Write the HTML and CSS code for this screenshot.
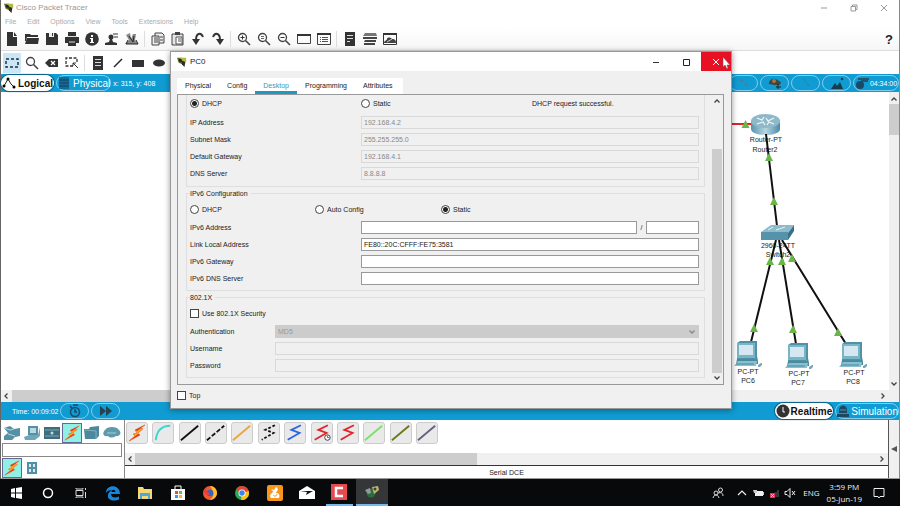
FILE: index.html
```html
<!DOCTYPE html>
<html lang="en">
<head>
<meta charset="utf-8">
<title>Cisco Packet Tracer</title>
<link rel="stylesheet" href="styles.css">
</head>
<body>
<svg class="defs" aria-hidden="true">
  <defs>
    <symbol id="app" viewBox="0 0 12 12"><path d="M0 1l6 0 3 5-2 3-5-2z" fill="#5c6b2c"/><path d="M3 1h8v5l-4 1z" fill="#b5b845"/><path d="M5 4l5 2-1 6-3-3z" fill="#2d3020"/><circle cx="4" cy="4" r="1.800" fill="#222"/></symbol>
    <symbol id="bolt" viewBox="0 0 18 18"><path d="M17 1L7 6l2 3-4 1 2 2-6 5 11-6-2-2 5-4-3-1z" fill="#f9a51a" stroke="#f0792a" stroke-width=".8"/><path d="M17 1L7 6l2 1zM1 17l11-6-2-1z" fill="#dd3434"/></symbol>
    <symbol id="up" viewBox="0 0 8 8"><path d="M1.500 5.500L4 3l2.500 2.500" fill="none" stroke="#444" stroke-width="1.300"/></symbol>
    <symbol id="down" viewBox="0 0 8 8"><path d="M1.500 2.500L4 5l2.500-2.500" fill="none" stroke="#444" stroke-width="1.300"/></symbol>
    <symbol id="left" viewBox="0 0 8 8"><path d="M5.500 1.500L3 4l2.500 2.500" fill="none" stroke="#444" stroke-width="1.300"/></symbol>
    <symbol id="right" viewBox="0 0 8 8"><path d="M2.500 1.500L5 4 2.500 6.500" fill="none" stroke="#444" stroke-width="1.300"/></symbol>
    <symbol id="lens" viewBox="0 0 14 14"><circle cx="5.500" cy="5.500" r="4" fill="none" stroke="#444" stroke-width="1.300"/><path d="M8.500 8.500l4.500 4.500" stroke="#444" stroke-width="1.600"/></symbol>
    <symbol id="zigzag" viewBox="0 0 22 22"><path d="M17.500 2.500L7 7.500l9 3.500L3 18.500" fill="none" stroke="currentColor" stroke-width="2"/></symbol>
    <symbol id="pc" viewBox="0 0 28 26"><path d="M3 2l3-2h17v16l-2 2H3z" fill="#4f92a8"/><path d="M3 2h18v15H3z" fill="#78b5c6"/><path d="M5 4h14v10H5z" fill="#d5e7f1"/><path d="M3 18h18l2-3 1 5v3H2z" fill="#4b8ba0"/><path d="M0 25l4-5h19l-1 5z" fill="#89bfce"/><path d="M2 23h18" stroke="#4b8ba0"/><path d="M24 24l3-2h1v2l-2 2h-2z" fill="#7aa7b5"/></symbol>
    <symbol id="link" viewBox="0 0 8 8"><path d="M4 0l4 8H0z" fill="#69b545"/></symbol>
  </defs>
</svg>
<div class="app">
  <header class="titlebar">
    <svg class="i10"><use href="#app"/></svg><span class="apptitle">Cisco Packet Tracer</span>
    <div class="winbtns faded">
      <button aria-label="Minimize"><svg class="i8" viewBox="0 0 8 8"><path d="M1 4h6" stroke="#999"/></svg></button>
      <button aria-label="Restore"><svg class="i8" viewBox="0 0 8 8"><path d="M1 2.500h4.500v4.500H1zM2.500 2.500V1H7v4.500H5.500" fill="none" stroke="#999"/></svg></button>
      <button aria-label="Close"><svg class="i8" viewBox="0 0 8 8"><path d="M1 1l6 6M7 1L1 7" stroke="#999"/></svg></button>
    </div>
  </header>
  <nav class="menubar"><a href="#">File</a><a href="#">Edit</a><a href="#">Options</a><a href="#">View</a><a href="#">Tools</a><a href="#">Extensions</a><a href="#">Help</a></nav>

  <div class="toolbar main">
    <button aria-label="New"><svg viewBox="0 0 14 14"><path d="M2 0h6v5h4v9H2z" fill="#333"/><path d="M9 0l3 4H9z" fill="#333"/></svg></button>
    <button aria-label="Open"><svg viewBox="0 0 14 14"><path d="M0 2h5l1 1h7v2H2L1 9H0z" fill="#333"/><path d="M2 6h12l-1 6H0z" fill="#333"/></svg></button>
    <button aria-label="Save"><svg viewBox="0 0 14 14"><path d="M1 1h10l2 2v10H1z" fill="#333"/><path d="M4 1h5v4H4z" fill="#eee"/><path d="M7 1h1v3H7z" fill="#333"/></svg></button>
    <button aria-label="Print"><svg viewBox="0 0 14 14"><path d="M3 0h8v4H3zM0 5h14v6h-3v3H3v-3H0z" fill="#333"/><path d="M2 4.500h10M4 10h6" stroke="#ddd"/></svg></button>
    <button aria-label="Activity information"><svg viewBox="0 0 14 14"><circle cx="7" cy="7" r="6.800" fill="#333"/><path d="M6 3h2v2H6zM5 6h3v4h1v1H5v-1h1V7H5z" fill="#fff"/></svg></button>
    <button aria-label="User profile"><svg viewBox="0 0 14 14"><circle cx="6" cy="5" r="2.500" fill="#333"/><path d="M5 7h2l1 3 4 1v2H0v-2l4-1z" fill="#333"/><path d="M8 2h5M9 5h4" stroke="#333"/></svg></button>
    <button aria-label="Activity wizard"><svg viewBox="0 0 14 14"><path d="M1 3l4-2 1 6 2-5h3l-1 6 3 4H0l4-4z" fill="#888"/><path d="M4 4l4 6 1-6M1 12h12M3 8l-2 4M11 8l2 4" stroke="#222" fill="none"/></svg></button>
    <i class="sep"></i>
    <button aria-label="Copy"><svg viewBox="0 0 14 14"><path d="M1 4h7v9H1zM4 4V1h7l2 2v8H8" fill="#eee" stroke="#444"/><path d="M3 6h4M3 8h4M3 10h4M9 5h3M9 8h3" stroke="#444"/></svg></button>
    <button aria-label="Paste"><svg viewBox="0 0 14 14"><path d="M1 2h11v11H1z" fill="#e6e6e6" stroke="#444"/><path d="M4 0h5v3H4z" fill="#444"/><path d="M5 5h6v7H5zM7 7h3M7 9h3" fill="#fff" stroke="#555"/></svg></button>
    <button aria-label="Undo"><svg viewBox="0 0 14 14"><path d="M12 5C10 0 5 1 5 8" fill="none" stroke="#333" stroke-width="2"/><path d="M1 7h8l-4 6z" fill="#333"/></svg></button>
    <button aria-label="Redo"><svg viewBox="0 0 14 14"><path d="M2 5c2-5 7-4 7 3" fill="none" stroke="#333" stroke-width="2"/><path d="M5 7h8l-4 6z" fill="#333"/></svg></button>
    <i class="sep"></i>
    <button aria-label="Zoom in"><svg viewBox="0 0 14 14"><use href="#lens"/><path d="M3.500 5.500h4M5.500 3.500v4" stroke="#333"/></svg></button>
    <button aria-label="Zoom reset"><svg viewBox="0 0 14 14"><use href="#lens"/><path d="M4 4.500h3M4 6.500h3" stroke="#666"/></svg></button>
    <button aria-label="Zoom out"><svg viewBox="0 0 14 14"><use href="#lens"/><path d="M3.500 5.500h4" stroke="#333"/></svg></button>
    <button aria-label="Drawing palette"><svg viewBox="0 0 14 14"><path d="M.5 3h13v8.500H.5z" fill="none" stroke="#444"/><path d="M0 3h14" stroke="#333" stroke-width="2"/></svg></button>
    <button aria-label="Custom devices"><svg viewBox="0 0 14 14"><path d="M.5 1.500h13v11H.5z" fill="none" stroke="#444"/><path d="M0 2h14" stroke="#333" stroke-width="2"/><path d="M3 5.500h1M3 7.500h1M3 9.500h1M5 5.500h6M5 7.500h6M5 9.500h6" stroke="#555"/></svg></button>
    <i class="sep"></i>
    <button aria-label="Notes"><svg viewBox="0 0 14 14"><path d="M2 0h10v14H2z" fill="#333"/><path d="M4 3.500h6M4 6.500h6M4 9.500h3" stroke="#ddd"/></svg></button>
    <button aria-label="Devices"><svg viewBox="0 0 14 14"><path d="M2 1h11l1 3H0z" fill="#777"/><path d="M0 5h14v2H0zM2 8h11v2H1zM1 11h11v2H1z" fill="#444"/></svg></button>
    <button aria-label="Cluster"><svg viewBox="0 0 14 14"><path d="M.5 1.500h13v11H.5z" fill="none" stroke="#333"/><path d="M0 1h14v2H0z" fill="#333"/><path d="M1 11c0-3 3-2 3-4s4-2 5 0c3 0 4 1 4 4z" fill="#444"/><path d="M4 10l5-3" stroke="#ccc"/></svg></button>
    <button class="help" aria-label="Help">?</button>
  </div>

  <div class="toolbar second">
    <button class="on" aria-label="Select"><svg viewBox="0 0 14 14"><path d="M1 3h12v8H1z" fill="none" stroke="#234" stroke-width="1.500" stroke-dasharray="3 2"/></svg></button>
    <button aria-label="Inspect"><svg viewBox="0 0 14 14"><use href="#lens"/></svg></button>
    <button aria-label="Delete"><svg viewBox="0 0 14 14"><path d="M0 7l4-4h9v8H4z" fill="#333"/><path d="M6 5l4 4M10 5L6 9" stroke="#fff" stroke-width="1.200"/></svg></button>
    <button aria-label="Resize"><svg viewBox="0 0 14 14"><path d="M8 10H1V2h11v5" fill="none" stroke="#333" stroke-width="1.300" stroke-dasharray="3 1.500"/><path d="M8 7l5 5M8 10V7h3" fill="none" stroke="#333"/></svg></button>
    <i class="sep"></i>
    <button aria-label="Place note"><svg viewBox="0 0 14 14"><path d="M2 0h10v14H2z" fill="#333"/><path d="M4 3.500h6M4 6.500h6M4 9.500h6" stroke="#ddd"/></svg></button>
    <button aria-label="Draw line"><svg viewBox="0 0 14 14"><path d="M3 11l8-8" stroke="#222" stroke-width="1.500"/></svg></button>
    <button aria-label="Draw rectangle"><svg viewBox="0 0 14 14"><path d="M1 4h12v7H1z" fill="#333"/></svg></button>
    <button aria-label="Draw ellipse"><svg viewBox="0 0 14 14"><ellipse cx="8" cy="7" rx="6" ry="3.500" fill="#333"/></svg></button>
  </div>

  <div class="bluebar views">
    <button class="pill solid"><svg class="i14" viewBox="0 0 14 14"><path d="M2 10L6 3l3 5 3 3" fill="none" stroke="#222"/><circle cx="2" cy="10" r="1.500"/><circle cx="6" cy="3" r="1.500"/><circle cx="12" cy="11" r="1.500"/></svg>Logical</button>
    <button class="pill"><svg class="i14" viewBox="0 0 14 14"><path d="M2 1h10v12H2z" fill="#176a98"/><path d="M2 4h10M2 7h10M2 10h10" stroke="#0e435f"/></svg>Physical</button>
    <span class="small">x: 315, y: 408</span>
    <div class="viewtools">
      <button class="pill" aria-label="Root"><svg class="i14" viewBox="0 0 14 14"><path d="M3 4l3 1M8 8l2 1" stroke="#4c7c96" stroke-width="2"/></svg></button>
      <button class="pill" aria-label="New cluster"><svg class="i14" viewBox="0 0 14 14"><path d="M1 8c0-5 5-7 10-3 3 1 2 4-1 4H7z" fill="#3e4542"/><circle cx="6" cy="5" r="2" fill="#a5763d"/><path d="M10 8v5M8 11h5" stroke="#222"/></svg></button>
      <button class="pill" aria-label="Move object"><svg class="i14" viewBox="0 0 14 14"><path d="M5 3l2 3M8 7l2 3" stroke="#367c9c"/></svg></button>
      <button class="pill" aria-label="Set background"><svg class="i14" viewBox="0 0 14 14"><path d="M1 13l4-6 2 3 3-4 3 7z" fill="#173c4d"/><circle cx="12" cy="3" r="1.300" fill="#173c4d"/></svg></button>
      <button class="pill clock"><svg class="i14" viewBox="0 0 14 14"><circle cx="5" cy="9" r="4" fill="#194a66"/><path d="M3 3h11M6 5h7" stroke="#27404c" stroke-width="1.500"/></svg>04:34:00</button>
    </div>
  </div>

  <main class="workspace">
    <div class="canvas">
      <svg class="network" viewBox="731 92 158 298" role="img" aria-label="Network topology">
        <defs><linearGradient id="metal"><stop offset="0" stop-color="#5a94ab"/><stop offset=".5" stop-color="#b5d6e1"/><stop offset="1" stop-color="#4c8aa2"/></linearGradient></defs>
        <path d="M731 124h22" stroke="#df2431" stroke-width="2"/>
        <path d="M751 120v9c0 8 29 8 29 0v-9z" fill="url(#metal)"/>
        <ellipse cx="765.500" cy="121" rx="14.500" ry="7" fill="#8fb9c9"/>
        <path d="M757 118l5 2 2-3M774 118l-6 3-2-3M757 124l6-2 2 3M774 124l-5-2-2 3" fill="none" stroke="#eef8fc" stroke-width="1.200"/>
        <text x="766" y="142">Router-PT</text><text x="765" y="152">Router2</text>
        <text x="778" y="248">2960-24TT</text><text x="778" y="257">Switch2</text>
        <g stroke="#111" stroke-width="2"><path d="M766 134l11 92M776 240l-25 102M779 240l17 104M782 240l64 104"/></g>
        <path d="M761 232l10-7h23l-6 8z" fill="#8fbccc"/><path d="M761 232h27v8h-27z" fill="#5593ab"/><path d="M788 233l6-8v6l-6 9z" fill="#36718a"/><path d="M768 230l5-3M776 230l9-3" stroke="#e2f2f7"/>
        <use href="#link" x="741" y="120" width="9" height="8"/>
        <use href="#link" x="765" y="153" width="8" height="8"/><use href="#link" x="770" y="197" width="8" height="8"/>
        <use href="#link" x="766" y="257" width="8" height="8"/><use href="#link" x="778" y="257" width="8" height="8"/><use href="#link" x="788" y="254" width="8" height="8"/>
        <use href="#link" x="750" y="324" width="8" height="8"/><use href="#link" x="789" y="325" width="8" height="8"/><use href="#link" x="834" y="328" width="8" height="8"/>
        <use href="#pc" x="734" y="341" width="28" height="26"/><use href="#pc" x="785" y="343" width="28" height="26"/><use href="#pc" x="839" y="342" width="28" height="26"/>
        <text x="748" y="374">PC-PT</text><text x="748" y="383">PC6</text>
        <text x="799" y="376">PC-PT</text><text x="798" y="385">PC7</text>
        <text x="854" y="375">PC-PT</text><text x="853" y="384">PC8</text>
      </svg>
    </div>
    <div class="vscroll"><svg class="i8"><use href="#up"/></svg><div class="track"><i class="thumb"></i></div><svg class="i8"><use href="#down"/></svg></div>
  </main>
  <div class="hscroll wide"><svg class="i8"><use href="#left"/></svg><div class="track"><i class="thumb"></i></div><svg class="i8"><use href="#right"/></svg></div>

  <div class="bluebar timebar">
    <span class="small time">Time: 00:09:02</span>
    <button class="pill" aria-label="Power cycle devices"><svg class="i14" viewBox="0 0 14 14"><circle cx="7" cy="8" r="4.500" fill="none" stroke="#174a66" stroke-width="1.500"/><path d="M5 1h5M7 5v3h2M2 2l2 2" stroke="#174a66" stroke-width="1.500" fill="none"/></svg></button>
    <button class="pill" aria-label="Fast forward time"><svg class="i14" viewBox="0 0 14 14"><path d="M1 2l6 5-6 5zM7 2l6 5-6 5z" fill="#23434f"/></svg></button>
    <div class="modes">
      <button class="pill solid"><svg class="i14" viewBox="0 0 14 14"><circle cx="7" cy="7" r="6.500" fill="#333"/><path d="M7 3v5h2" fill="none" stroke="#fff"/></svg>Realtime</button>
      <button class="pill"><svg class="i14" viewBox="0 0 14 14"><path d="M3 6c0-6 8-6 8 0v3H3z" fill="#1d4960"/><path d="M1 10h12v3H1z" fill="#1d4960"/><path d="M4 6h6" stroke="#4992b5"/></svg>Simulation</button>
    </div>
  </div>

  <section class="devices">
    <div class="picker">
      <div class="kinds">
        <button aria-label="Network devices"><svg viewBox="0 0 18 16"><path d="M1 3l6-2 4 3 6-1v8l-5 1-3 3H1v-4l4-3z" fill="#5590a4"/><path d="M1 3l6 2 4-1M5 9l7 2" stroke="#b5d6df" fill="none"/></svg></button>
        <button aria-label="End devices"><svg viewBox="0 0 18 16"><path d="M5 1h10v9H5z" fill="#5590a4"/><path d="M7 3h6v5H7z" fill="#b9d9e2"/><path d="M1 12l5-2h9l2-8v9l-5 4H2z" fill="#6ea7b8"/></svg></button>
        <button aria-label="Components"><svg viewBox="0 0 18 16"><path d="M1 2h16v12H1z" fill="#3f6d7d"/><path d="M2 5h14M2 11h14" stroke="#7faab6"/><circle cx="9" cy="8" r="1.500" fill="#bcdde5"/></svg></button>
        <button class="on" aria-label="Connections"><svg viewBox="0 0 18 18"><use href="#bolt"/></svg></button>
        <button aria-label="Miscellaneous"><svg viewBox="0 0 18 16"><path d="M1 4h5l1-2 9-1v10l-3 3H2z" fill="#4d889c"/><path d="M2 5l11 1v8" stroke="#7fb3c3" fill="none"/></svg></button>
        <button aria-label="Multiuser connection"><svg viewBox="0 0 18 16"><path d="M2 5c2-4 12-4 14 0 3 3 1 6-3 6-3 2-6 2-8 0C0 12-1 8 2 5z" fill="#5e99ac"/><path d="M4 8h9" stroke="#a8ced9"/></svg></button>
      </div>
      <input type="text" aria-label="Search devices">
      <div class="kinds">
        <button class="on" aria-label="Connections"><svg viewBox="0 0 18 18"><use href="#bolt"/></svg></button>
        <button aria-label="Structured cabling"><svg viewBox="0 0 18 16"><path d="M4 2h10v12H4z" fill="#5290a8"/><path d="M6 4h2v3H6zM10 4h2v3h-2zM6 9h2v3H6zM10 9h2v3h-2z" fill="#dcebf0"/></svg></button>
      </div>
    </div>
    <div class="cables">
      <div class="cablelist">
        <button aria-label="Automatic connection"><svg viewBox="-1 -1 20 20"><use href="#bolt" width="18" height="18"/></svg></button>
        <button aria-label="Console"><svg viewBox="0 0 22 22"><path d="M3 19C4 9 9 3 19 3" fill="none" stroke="#3fd6cc" stroke-width="2"/></svg></button>
        <button aria-label="Copper straight-through"><svg viewBox="0 0 22 22"><path d="M1 19L20 3" stroke="#111" stroke-width="2"/></svg></button>
        <button aria-label="Copper cross-over"><svg viewBox="0 0 22 22"><path d="M1 19L20 3" stroke="#111" stroke-width="2" stroke-dasharray="5 2"/></svg></button>
        <button aria-label="Fiber"><svg viewBox="0 0 22 22"><path d="M1 19L20 3" stroke="#f0a23c" stroke-width="2"/></svg></button>
        <button class="black dots" aria-label="Phone"><svg><use href="#zigzag"/></svg></button>
        <button class="blue" aria-label="Coaxial"><svg><use href="#zigzag"/></svg></button>
        <button class="red" aria-label="Serial DCE"><svg viewBox="0 0 22 22"><use href="#zigzag"/><circle cx="17" cy="16" r="3" fill="#fff" stroke="#333"/><path d="M17 14v2h2" fill="none" stroke="#333" stroke-width=".8"/></svg></button>
        <button class="red" aria-label="Serial DTE"><svg><use href="#zigzag"/></svg></button>
        <button aria-label="Octal"><svg viewBox="0 0 22 22"><path d="M1 19L20 3" stroke="#7be06a" stroke-width="2"/></svg></button>
        <button aria-label="IoT custom cable"><svg viewBox="0 0 22 22"><path d="M1 19L20 3" stroke="#6d7618" stroke-width="2"/></svg></button>
        <button aria-label="USB"><svg viewBox="0 0 22 22"><path d="M1 19L20 3" stroke="#65607c" stroke-width="2"/></svg></button>
      </div>
      <div class="hscroll"><svg class="i8"><use href="#left"/></svg><div class="track"><i class="thumb"></i></div><svg class="i8"><use href="#right"/></svg></div>
      <div class="cablename">Serial DCE</div>
    </div>
    <button class="collapse" aria-label="Collapse"><svg class="i8" viewBox="0 0 8 8"><path d="M7 1v6L1 4z" fill="#555"/></svg></button>
  </section>

  <section class="dialog" role="dialog" aria-label="PC0">
    <div class="dlgtitle">
      <svg class="i10"><use href="#app"/></svg><span>PC0</span>
      <div class="winbtns">
        <button aria-label="Minimize"><svg class="i8" viewBox="0 0 8 8"><path d="M1 4.500h6" stroke="#333"/></svg></button>
        <button aria-label="Maximize"><svg class="i8" viewBox="0 0 8 8"><path d="M1.500 1.500h6v6h-6z" fill="none" stroke="#222"/></svg></button>
        <button class="close" aria-label="Close"><svg class="i8" viewBox="0 0 8 8"><path d="M1 1l6 6M7 1L1 7" stroke="#fff"/></svg>
          <svg class="cursor" viewBox="0 0 8 12"><path d="M1 0v10l2-2 2 4 1-1-1-3h3z" fill="#fff" stroke="#555" stroke-width=".5"/></svg></button>
      </div>
    </div>
    <div class="tabs" role="tablist">
      <button role="tab">Physical</button><button role="tab">Config</button><button role="tab" class="active">Desktop</button><button role="tab">Programming</button><button role="tab">Attributes</button>
    </div>
    <div class="frame">
      <form class="form">
        <fieldset class="ipv4" aria-label="IP Configuration">
          <div class="options"><label><input type="radio" name="v4" checked>DHCP</label><label><input type="radio" name="v4">Static</label><span>DHCP request successful.</span></div>
          <div class="row"><label for="ip">IP Address</label><input id="ip" type="text" value="192.168.4.2" disabled></div>
          <div class="row"><label for="mask">Subnet Mask</label><input id="mask" type="text" value="255.255.255.0" disabled></div>
          <div class="row"><label for="gw">Default Gateway</label><input id="gw" type="text" value="192.168.4.1" disabled></div>
          <div class="row"><label for="dns">DNS Server</label><input id="dns" type="text" value="8.8.8.8" disabled></div>
        </fieldset>
        <fieldset class="ipv6">
          <legend>IPv6 Configuration</legend>
          <div class="options"><label><input type="radio" name="v6">DHCP</label><label><input type="radio" name="v6">Auto Config</label><label><input type="radio" name="v6" checked>Static</label></div>
          <div class="row"><label for="ip6">IPv6 Address</label><input id="ip6" type="text"><span class="slash">/</span><input class="prefix" type="text" aria-label="Prefix length"></div>
          <div class="row"><label for="ll">Link Local Address</label><input id="ll" type="text" value="FE80::20C:CFFF:FE75:3581"></div>
          <div class="row"><label for="gw6">IPv6 Gateway</label><input id="gw6" type="text"></div>
          <div class="row"><label for="dns6">IPv6 DNS Server</label><input id="dns6" type="text"></div>
        </fieldset>
        <fieldset class="dot1x">
          <legend>802.1X</legend>
          <div class="options"><label><input type="checkbox">Use 802.1X Security</label></div>
          <div class="row"><label for="auth">Authentication</label><span class="select"><select id="auth" disabled><option>MD5</option></select><svg class="i8"><use href="#down"/></svg></span></div>
          <div class="row"><label for="user">Username</label><input id="user" type="text" disabled></div>
          <div class="row"><label for="pass">Password</label><input id="pass" type="password" disabled></div>
        </fieldset>
      </form>
      <div class="vscroll"><svg class="i8"><use href="#up"/></svg><div class="track"><i class="thumb"></i></div><svg class="i8"><use href="#down"/></svg></div>
    </div>
    <label class="top"><input type="checkbox">Top</label>
  </section>
</div>

<footer class="taskbar">
  <div class="tasks">
    <button aria-label="Start"><svg viewBox="0 0 16 16"><path d="M3 4l4-1v4.500H3zM8 3l6-1v5.500H8zM3 8.500h4V13l-4-1zM8 8.500h6V14l-6-1z" fill="#fff"/></svg></button>
    <button aria-label="Search"><svg viewBox="0 0 16 16"><circle cx="8" cy="8" r="4.500" fill="none" stroke="#fff" stroke-width="1.500"/></svg></button>
    <button aria-label="Task view"><svg viewBox="0 0 16 16"><path d="M3 5.500h7v5H3zM3 3v1h7V3M3 13v-1h7v1M12.500 3v2M12.500 7v6" fill="none" stroke="#ddd"/></svg></button>
    <button aria-label="Edge"><svg viewBox="0 0 16 16"><path d="M1 8C1-1 15-1 15 9H6c0 4 5 4 8 2.500v3C8 17 2 15 3 10c0-2 2-4 4-5-3 0-5 1-6 3zM6.500 7h4C10 4 7 4 6.500 7z" fill="#1686dc"/></svg></button>
    <button aria-label="File Explorer"><svg viewBox="0 0 16 16"><path d="M1 2h5l1 2h8v10H1z" fill="#f7d774"/><path d="M3 8h10v6h-2v-3H5v3H3z" fill="#4aa8dc"/></svg></button>
    <button aria-label="Store"><svg viewBox="0 0 16 16"><path d="M5 5V1h6v4" fill="none" stroke="#fff"/><path d="M1 4h14v11H1z" fill="#fff"/><path d="M5 6h3v3H5z" fill="#e6502d"/><path d="M9 6h3v3H9z" fill="#7cba2c"/><path d="M5 10h3v3H5z" fill="#29a1e0"/><path d="M9 10h3v3H9z" fill="#f7b91d"/></svg></button>
    <button aria-label="Firefox"><svg viewBox="0 0 16 16"><circle cx="8" cy="8" r="7" fill="#f25a2b"/><path d="M8 1c5 0 7 4 7 7s-3 7-7 7c6-5 3-9 0-14z" fill="#fcc02f"/><circle cx="8" cy="8" r="3.300" fill="#3565c4"/><path d="M1 7l3-4 1 4 3 1-2 3z" fill="#ed3d3b"/></svg></button>
    <button aria-label="Chrome"><svg viewBox="0 0 16 16"><circle cx="8" cy="8" r="7" fill="#31a853"/><path d="M8 8L2 4.500A7 7 0 0 1 14.700 6z" fill="#e64235"/><path d="M8 8l6.700-2A7 7 0 0 1 7 15z" fill="#fbc116"/><circle cx="8" cy="8" r="3.500" fill="#fff"/><circle cx="8" cy="8" r="2.700" fill="#3f83ed"/></svg></button>
    <button aria-label="UC Browser"><svg viewBox="0 0 16 16"><rect width="16" height="16" rx="2" fill="#f7951d"/><path d="M9 2c4 2 0 5 0 6 3 0 4 2 3 5H4C1 9 6 9 6 6 4 5 4 3 7 5z" fill="#fff"/><path d="M6 10c2 2 4 1 4-1" stroke="#f7951d" fill="none"/></svg></button>
    <button aria-label="Mail"><svg viewBox="0 0 16 16"><path d="M0 6l8-5 8 5v8H0z" fill="#fff"/><path d="M1 6h13L7 10l1-3z" fill="#111"/></svg></button>
    <button class="running" aria-label="Camtasia"><svg viewBox="0 0 16 16"><path d="M0 0h16v16H0z" fill="#e64a4f"/><path d="M12 4H5v8h7" fill="none" stroke="#fff" stroke-width="2.500"/></svg></button>
    <button class="running current" aria-label="Packet Tracer"><svg viewBox="0 0 16 16"><circle cx="7" cy="9" r="4.500" fill="#2d6b3d"/><path d="M1 6l5-2 1 5-3 1z" fill="#909c9a"/><path d="M8 3l6-1 1 4-5 4z" fill="#c4b866"/><circle cx="11" cy="5" r="1.500" fill="#344"/></svg></button>
  </div>
  <div class="tray">
    <svg class="i12 people" viewBox="0 0 12 12"><circle cx="4" cy="6" r="2" fill="none" stroke="#ddd"/><circle cx="8.500" cy="3" r="2" fill="none" stroke="#ddd"/><path d="M1 11c1-4 5-4 6 0M6 6c3-1 5 0 5 3" fill="none" stroke="#ddd"/></svg>
    <svg class="i12" viewBox="0 0 12 12"><path d="M2 8l4-4 4 4" fill="none" stroke="#eee" stroke-width="1.200"/></svg>
    <svg class="i12" viewBox="0 0 12 12"><path d="M3 4h8v5H3z" fill="#eee"/><path d="M1 3h4v3H2zM11 5h1v3h-1z" fill="#ccc"/></svg>
    <svg class="i12" viewBox="0 0 12 12"><path d="M6 10V7M8 10V5M10 10V3" stroke="#666"/><path d="M2 6h5v5H2z" fill="#e52f55"/><path d="M3 7l3 3M6 7l-3 3" stroke="#fff" stroke-width=".7"/></svg>
    <svg class="i12" viewBox="0 0 12 12"><path d="M1 4.500h2l3-3v9l-3-3H1zM8 4l3 4M11 4L8 8" fill="none" stroke="#eee"/></svg>
    <span class="lang">ENG</span>
    <span class="date">3:59 PM<br>05-Jun-19</span>
    <svg class="i12" viewBox="0 0 12 12"><path d="M1 1.500h10v8H7L6 11 5 9.500H1z" fill="none" stroke="#eee"/></svg>
  </div>
</footer>
</body>
</html>
```
FILE: styles.css
```css
* { box-sizing: border-box; }

body {
  margin: 0;
  height: 100vh;
  display: flex;
  flex-direction: column;
  overflow: hidden;
  background: #fff;
  color: #222;
  font: 7px/9px "Liberation Sans", Arial, sans-serif;
}

button, input, select { font: inherit; color: inherit; margin: 0; }
button { padding: 0; border: 0; background: none; display: flex; align-items: center; justify-content: center; }
svg { display: block; flex: none; }
.defs { position: absolute; width: 0; height: 0; }
.i8 { width: 8px; height: 8px; }
.i10 { width: 10px; height: 10px; }
.i12 { width: 12px; height: 12px; }
.i14 { width: 14px; height: 14px; }

.app {
  position: relative;
  flex: 1;
  min-height: 0;
  display: flex;
  flex-direction: column;
  border-left: 1px solid #666;
  border-right: 1px solid #888;
}

/* Main window chrome */
.titlebar { height: 15px; display: flex; align-items: center; padding-left: 3px; gap: 2px; color: #999; }
.apptitle { font-size: 8px; line-height: 10px; }
.winbtns { margin-left: auto; align-self: stretch; display: flex; }
.winbtns button { width: 30px; }
.menubar { height: 13px; display: flex; align-items: center; gap: 11px; padding-left: 4px; }
.menubar a { color: #aaa; text-decoration: none; }

.toolbar { display: flex; align-items: center; height: 23px; padding-left: 1px; }
.toolbar button { width: 20px; height: 20px; }
.toolbar button svg { width: 14px; height: 14px; }
.toolbar .sep { width: 1px; height: 16px; margin: 0 3px 0 2px; background: #ddd; }
.toolbar.main { background: linear-gradient(#fff, #f6f6f6); border-bottom: 1px solid #ddd; }
.toolbar .on { background: #cce6f6; width: 18px; margin: 0 1px; }
.toolbar .help { margin-left: auto; font-size: 13px; font-weight: bold; }

.bluebar { height: 18px; display: flex; align-items: center; background: #109bd2; color: #fff; }
.pill {
  height: 16px;
  min-width: 29px;
  border: 1px solid #7fcdec;
  border-radius: 8px;
  font-size: 10px;
  color: #fff;
}
.pill.solid { background: #fff; color: #111; border-color: #fff; font-weight: bold; box-shadow: 0 0 1px 1px #0b5f85; }
.small { font-size: 7px; white-space: nowrap; }
.views { gap: 2px; }
.views > .pill { gap: 2px; }
.viewtools { margin-left: auto; display: flex; gap: 2px; }
.pill.clock { font-size: 7px; gap: 1px; width: 46px; }
.time { padding-left: 11px; }
.timebar { gap: 2px; }
.modes { margin-left: auto; display: flex; gap: 2px; }
.modes .pill { gap: 1px; }

/* Workspace */
.workspace { flex: 1; min-height: 0; display: flex; }
.canvas { flex: 1; display: flex; justify-content: flex-end; overflow: hidden; }
.network { width: 158px; height: 298px; }
.network text { font-size: 7px; text-anchor: middle; fill: #222; }

.vscroll { width: 10px; display: flex; flex-direction: column; align-items: center; padding: 3px 0 2px; background: #f0f0f0; }
.vscroll .track { flex: 1; width: 100%; display: flex; flex-direction: column; }
.hscroll { height: 12px; display: flex; align-items: center; padding: 0 2px 0 1px; background: #f0f0f0; }
.hscroll .track { flex: 1; height: 100%; display: flex; }
.thumb { background: #cdcdcd; }
.workspace .thumb { height: 31px; margin-top: 1px; }
.hscroll .thumb { width: 46%; margin-left: 1px; }
.hscroll.wide .thumb { width: 60%; margin-left: 2px; }
.hscroll.wide { padding-right: 12px; }

/* Device picker */
.devices { height: 59px; display: flex; border-bottom: 1px solid #999; }
.picker { width: 124px; border-right: 1px solid #888; padding: 2px 2px 0 1px; }
.kinds { display: flex; height: 21px; align-items: center; }
.kinds button { width: 20px; height: 20px; }
.kinds svg { width: 18px; height: 16px; }
.kinds .on { background: #8ff0e6; border: 1px solid #669; }
.picker input { display: block; width: 100%; height: 14px; border: 1px solid #888; background: #fff; }
.cables { flex: 1; display: flex; flex-direction: column; border-right: 1px solid #555; }
.cablelist { flex: 1; width: 313px; display: flex; justify-content: space-between; align-items: flex-start; padding: 2px 0 0 1px; }
.cablelist button { width: 22px; height: 22px; border: 1px solid #ccc; border-radius: 3px; background: #e9e9e9; }
.cablelist svg { width: 20px; height: 20px; }
.black { color: #111; }
.blue { color: #2b64e3; }
.red { color: #e3222c; }
.dots { stroke-dasharray: 3 2; }
.cablename { height: 13px; line-height: 14px; border-top: 1px solid #333; text-align: center; }
.collapse { width: 10px; background: #f0f0f0; }

/* PC0 dialog */
.dialog {
  position: absolute;
  left: 169px;
  right: 167px;
  top: 51px;
  bottom: 70px;
  display: flex;
  flex-direction: column;
  background: #f0f0f0;
  border: 1px solid #999;
  box-shadow: 0 1px 6px rgba(0, 0, 0, .4);
}
.dlgtitle { height: 19px; display: flex; align-items: center; gap: 3px; padding-left: 6px; background: #fff; }
.dlgtitle span { font-size: 8px; line-height: 10px; }
.close { position: relative; background: #e81123; }
.cursor { position: absolute; left: 21px; top: 5px; width: 8px; height: 12px; }
.tabs { align-self: flex-start; display: flex; margin: 7px 0 0 6px; padding-right: 2px; background: #fff; }
.tabs button { height: 16px; padding: 0 8px; border-bottom: 3px solid transparent; border-top: 1px solid transparent; }
.tabs .active { color: #3798bd; border-bottom-color: #1c98c4; }
.frame { flex: 1; min-height: 0; margin: 0 7px 0 6px; display: flex; border: 1px solid #999; }
.form { flex: 1; padding: 0 6px 0 8px; }
fieldset { margin: 0; min-width: 0; padding: 0 5px 3px 3px; border: 1px solid #dedede; }
legend { height: 13px; line-height: 13px; padding: 0 3px 0 0; }
.ipv4 { border-top: 0; padding-bottom: 4px; }
.options { height: 19px; display: grid; grid-template-columns: 125px 126px 1fr; align-items: center; }
.ipv4 .options { grid-template-columns: 171px 171px 1fr; padding-bottom: 2px; }
.dot1x .options { grid-template-columns: 1fr; }
.options label, .top { display: flex; align-items: center; gap: 3px; }
input[type="radio"], input[type="checkbox"] {
  appearance: none;
  width: 9px;
  height: 9px;
  border: 1px solid #444;
  background: #fff;
}
input[type="radio"] { border-radius: 50%; }
input[type="radio"]:checked { background: radial-gradient(circle, #222 0 2px, #fff 3px); }
.row { height: 17px; display: flex; align-items: center; }
.row label { width: 171px; }
.dot1x .row label { width: 85px; }
.row input, .select { flex: 1; min-width: 0; height: 13px; }
.row input { padding: 0 2px; border: 1px solid #999; background: #fff; }
.row input:disabled { background: #f0f0f0; border-color: #d9d9d9; color: #888; }
.row .prefix { flex: none; width: 53px; }
.slash { width: 9px; text-align: center; }
.select { display: flex; align-items: center; background: #ccc; padding-right: 3px; }
.select select { flex: 1; appearance: none; border: 0; padding: 0 3px; background: none; color: #999; opacity: 1; }
.select svg { opacity: .5; }
.frame .vscroll { width: 12px; padding: 2px 1px; }
.frame .thumb { flex: 1; margin: 44px 0 1px; }
.top { height: 23px; margin-left: 6px; padding-bottom: 3px; }

/* Taskbar */
.taskbar { height: 27px; display: flex; justify-content: space-between; background: #08090a; color: #eee; }
.tasks { width: 388px; display: grid; grid-template-columns: repeat(12, 1fr); }
.tasks svg { width: 16px; height: 16px; }
.running { border-bottom: 2px solid #76b9ed; margin: 0 3px; }
.current { background: #343638; margin: 0; }
.tray { display: flex; align-items: center; gap: 4px; padding-right: 15px; font: 8px/12px "Open Sans", sans-serif; }
.people { margin-right: 8px; }
.lang { margin: 0 3px; }
.date { text-align: center; margin-right: 7px; }
```
